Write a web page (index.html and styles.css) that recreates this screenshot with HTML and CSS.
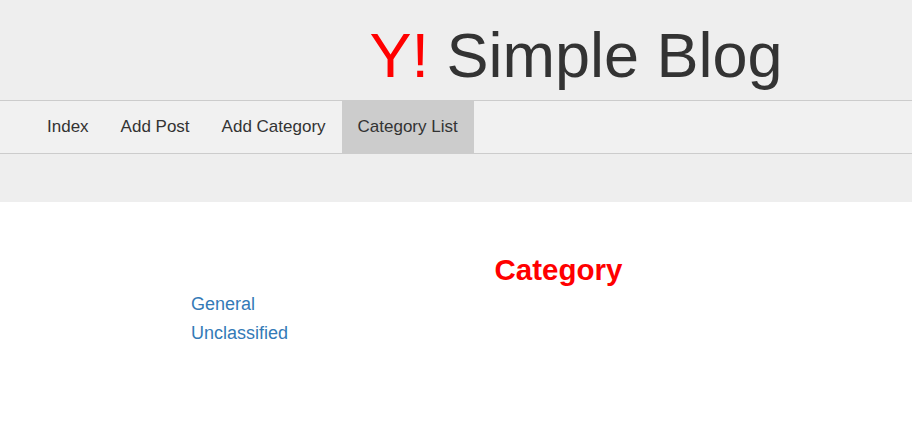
FILE: index.html
```html
<!DOCTYPE html>
<html lang="en">
<head>
    <meta charset="UTF-8">
    <meta name="viewport" content="width=device-width, initial-scale=1.0">
    <title>Y! Simple Blog</title>
    <link rel="stylesheet" href="styles.css">
</head>
<body>
    <header class="site-header">
        <h1 class="brand"><span class="brand-mark">Y!</span> Simple Blog</h1>

        <nav class="main-nav">
            <ul>
                <li><a href="#">Index</a></li>
                <li><a href="#">Add Post</a></li>
                <li><a href="#">Add Category</a></li>
                <li class="active"><a href="#">Category List</a></li>
            </ul>
        </nav>
    </header>

    <main class="content">
        <h2 class="page-title">Category</h2>
        <ul class="category-list">
            <li><a href="#">General</a></li>
            <li><a href="#">Unclassified</a></li>
        </ul>
    </main>
</body>
</html>
```

FILE: styles.css
```css
body {
    font-family: 'Liberation Sans', Arial, sans-serif;
    margin: 0;
    padding: 0;
    color: #333;
    background-color: #fff;
}
a {
    text-decoration: none;
}
.site-header {
    background-color: #eeeeee;
    padding-bottom: 48px;
}
.brand {
    margin: 0;
    padding: 19px 0 0 240px;
    height: 100px;
    box-sizing: border-box;
    font-size: 63px;
    font-weight: normal;
    line-height: 72px;
    text-align: center;
    color: #333;
}
.brand-mark {
    color: #ff0000;
}
.main-nav {
    background-color: #f1f1f1;
    border-top: 1px solid #cccccc;
    border-bottom: 1px solid #cccccc;
}
.main-nav ul {
    list-style: none;
    margin: 0;
    padding: 0 0 0 31px;
    display: flex;
}
.main-nav a {
    display: block;
    padding: 0 16px;
    line-height: 52px;
    font-size: 17px;
    color: #333;
}
.main-nav .active a {
    background-color: #cccccc;
    margin-top: -1px;
    padding-top: 1px;
}
.content {
    padding: 50px 0 0 191px;
}
.page-title {
    margin: 0 0 2px 14px;
    font-size: 29.5px;
    line-height: 36px;
    color: #ff0000;
    text-align: center;
}
.category-list {
    list-style: none;
    margin: 0;
    padding: 0;
}
.category-list a {
    display: block;
    font-size: 18px;
    line-height: 29px;
    color: #337ab7;
}
```
